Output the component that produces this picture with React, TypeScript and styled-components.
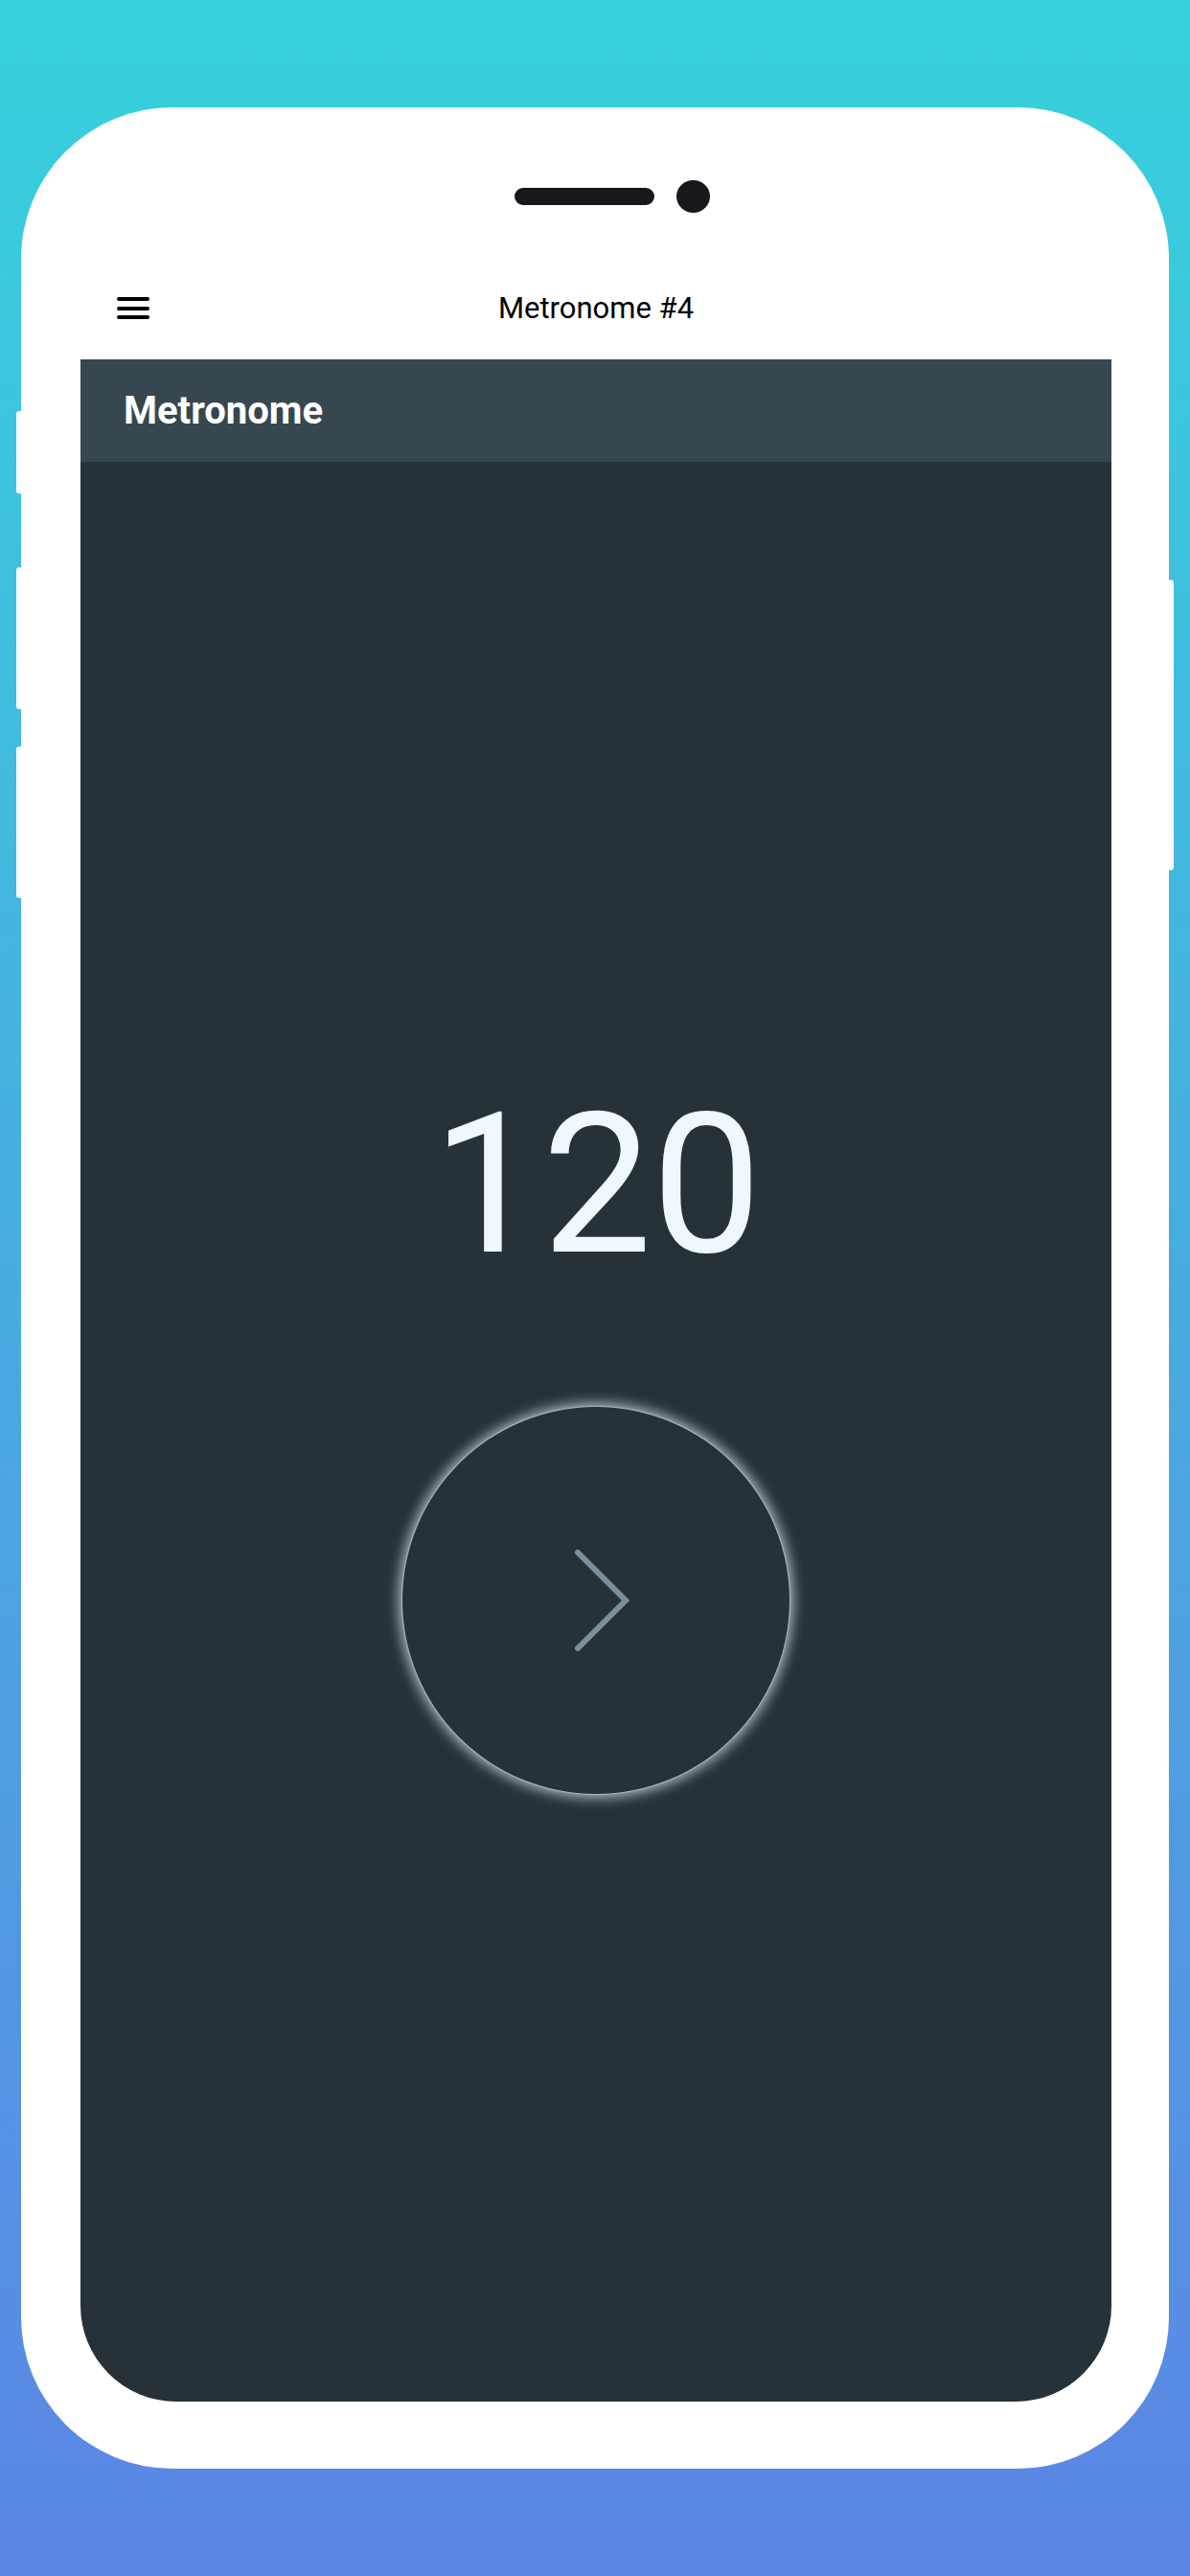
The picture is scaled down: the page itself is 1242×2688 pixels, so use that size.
import React from 'react';
import styled, { createGlobalStyle } from 'styled-components';

const GlobalStyle = createGlobalStyle`
    html, body {
        margin: 0;
        padding: 0;
    }
    body {
        font-family: Roboto, "Noto Sans", "Liberation Sans", sans-serif;
    }
`;

const Page = styled.div`
    width: 1242px;
    height: 2688px;
    box-sizing: border-box;
    padding: 112px 0 0 22px;
    background: linear-gradient(180deg, #36d1dc 0%, #5b86e5 100%);
    overflow: hidden;
`;

const Phone = styled.div`
    position: relative;
    width: 1198px;
    height: 2464px;
    box-sizing: border-box;
    padding: 66px 60px 70px 62px;
    background-color: #fff;
    border-radius: 158px;
`;

const SideButton = styled.div<{ side: 'left' | 'right'; top: number; height: number }>`
    position: absolute;
    ${props => props.side === 'left' ? 'left: -5px;' : 'right: -5px;'}
    top: ${props => props.top}px;
    width: 6px;
    height: ${props => props.height}px;
    background-color: #fff;
    border-radius: ${props => props.side === 'left' ? '3px 0 0 3px' : '0 3px 3px 0'};
`;

const Screen = styled.div`
    display: flex;
    flex-direction: column;
    height: 100%;
    background-color: #fff;
    border-radius: 96px 96px 100px 100px;
    overflow: hidden;
`;

const StatusArea = styled.div`
    height: 90px;
    box-sizing: border-box;
    padding: 10px 0 0 34px;
    display: flex;
    justify-content: center;
    align-items: flex-start;
`;

const Notch = styled.div`
    display: flex;
    align-items: center;
    gap: 23px;
    height: 34px;
`;

const Speaker = styled.div`
    width: 146px;
    height: 18px;
    border-radius: 9px;
    background-color: #18171c;
`;

const Camera = styled.div`
    width: 35px;
    height: 34px;
    border-radius: 50%;
    background-color: #18171c;
`;

const AppBar = styled.div`
    height: 107px;
    box-sizing: border-box;
    padding: 0 38px;
    display: grid;
    grid-template-columns: 1fr auto 1fr;
    align-items: center;
    background-color: #fff;
`;

const Hamburger = styled.div`
    display: flex;
    flex-direction: column;
    gap: 5.5px;
    width: 34px;
`;

const HamburgerLine = styled.span`
    display: block;
    height: 4px;
    border-radius: 2px;
    background-color: #000;
`;

const AppTitle = styled.div`
    font-size: 31px;
    font-weight: 400;
    color: #000;
    line-height: 1;
`;

const Header = styled.div`
    height: 107px;
    box-sizing: border-box;
    padding-left: 45px;
    display: flex;
    align-items: center;
    background-color: #37474f;
`;

const HeaderTitle = styled.h1`
    margin: 0;
    font-size: 40px;
    font-weight: 700;
    color: #fff;
    line-height: 1;
`;

const Content = styled.div`
    flex: 1;
    display: flex;
    flex-direction: column;
    align-items: center;
    box-sizing: border-box;
    padding-top: 653px;
    background-color: #263238;
`;

const Tempo = styled.div`
    font-size: 204px;
    font-weight: 400;
    line-height: 1;
    color: #f0f8ff;
    margin-left: 2px;
`;

const PlayButton = styled.button`
    margin-top: 129px;
    width: 404px;
    height: 404px;
    border-radius: 50%;
    border: none;
    padding: 0;
    display: flex;
    align-items: center;
    justify-content: center;
    background-color: #263238;
    box-shadow: 0 0 1px 1px rgba(176, 190, 197, 0.95), 0 0 13px 4px rgba(207, 216, 220, 0.8);
    cursor: pointer;
`;

const Chevron = styled.svg`
    margin-left: 10px;
`;

const App: React.FC = () => {
    const bpm = 120;

    return (
        <React.Fragment>
            <GlobalStyle />
            <Page>
                <Phone>
                    <SideButton side="left" top={317} height={86} />
                    <SideButton side="left" top={480} height={148} />
                    <SideButton side="left" top={667} height={158} />
                    <SideButton side="right" top={493} height={303} />
                    <Screen>
                        <StatusArea>
                            <Notch>
                                <Speaker />
                                <Camera />
                            </Notch>
                        </StatusArea>
                        <AppBar>
                            <Hamburger>
                                <HamburgerLine />
                                <HamburgerLine />
                                <HamburgerLine />
                            </Hamburger>
                            <AppTitle>Metronome #4</AppTitle>
                            <div />
                        </AppBar>
                        <Header>
                            <HeaderTitle>Metronome</HeaderTitle>
                        </Header>
                        <Content>
                            <Tempo>{bpm}</Tempo>
                            <PlayButton aria-label="Start">
                                <Chevron width="60" height="112" viewBox="0 0 60 112">
                                    <path
                                        d="M6 6 L56 56 L6 106"
                                        fill="none"
                                        stroke="#78909c"
                                        strokeWidth="6"
                                        strokeLinecap="round"
                                        strokeLinejoin="miter"
                                    />
                                </Chevron>
                            </PlayButton>
                        </Content>
                    </Screen>
                </Phone>
            </Page>
        </React.Fragment>
    );
};

export default App;
